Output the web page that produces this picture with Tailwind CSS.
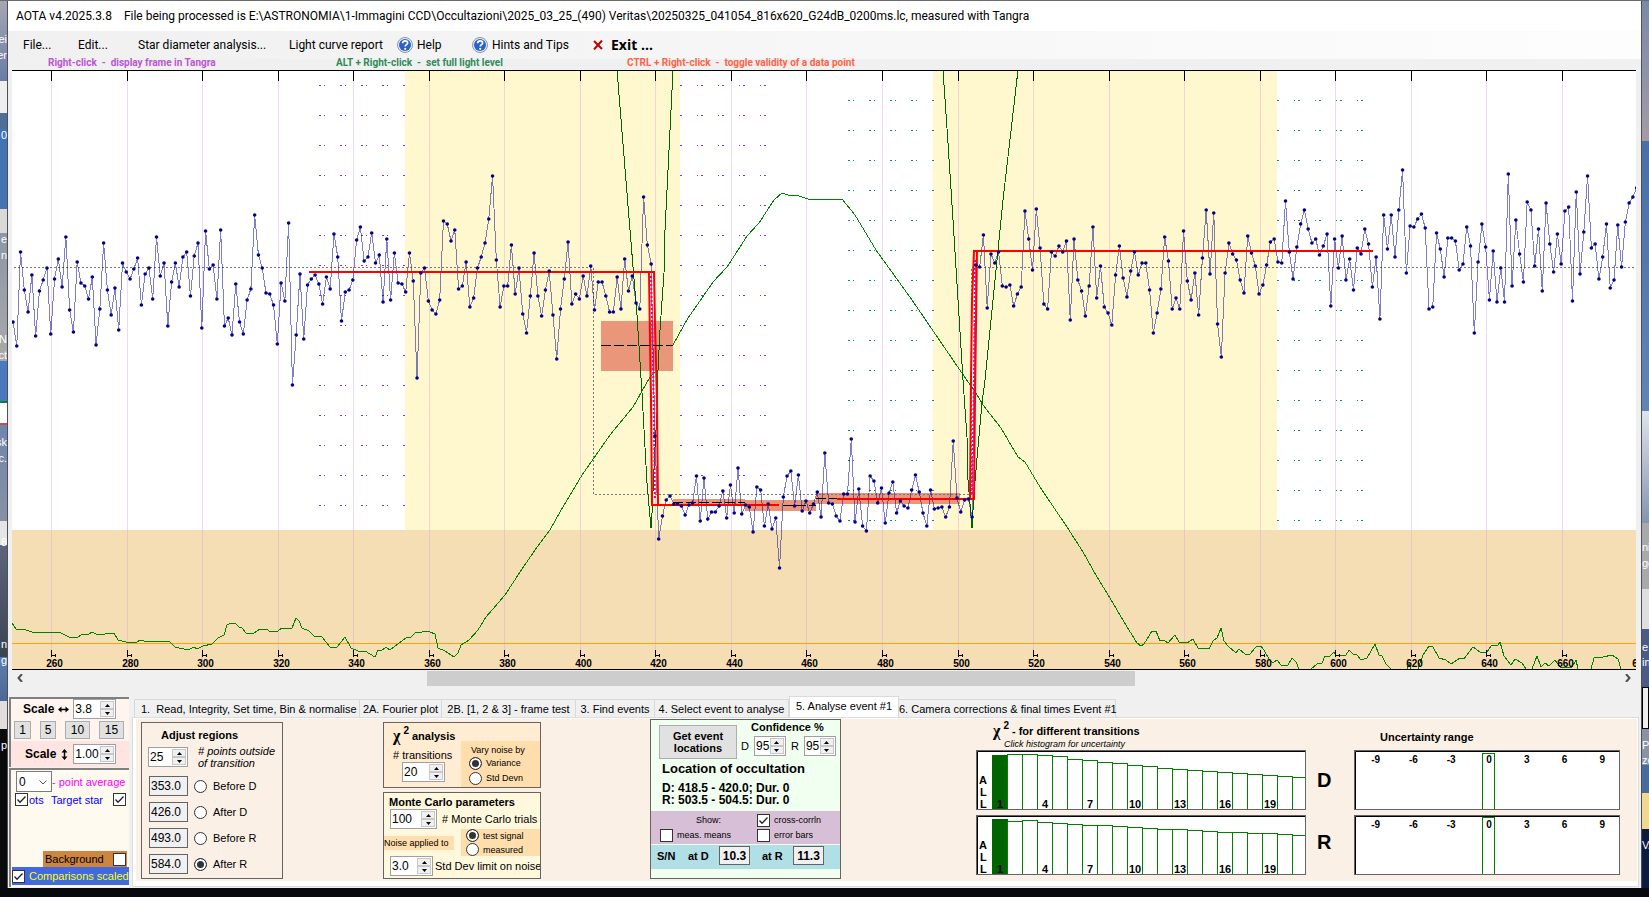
<!DOCTYPE html>
<html lang="en">
  <head>
    <meta charset="UTF-8" />
    <meta name="viewport" content="width=device-width, initial-scale=1.0" />
    <script src="https://cdn.jsdelivr.net/npm/@tailwindcss/browser@4"></script>
    <title>AOTA v4.2025.3.8</title>
  </head>
  <body class="bg-[#07090c] font-['Liberation_Sans',sans-serif] text-[11px] leading-3 text-black">
    <div class="flex min-h-screen flex-col">
      <div class="h-px bg-[#6b6a6c]"></div>
      <div class="flex">
        <!-- desktop, left edge -->
        <div class="relative w-[7px] shrink-0 overflow-hidden bg-[#090b0d] text-white" aria-hidden="true">
          <div class="h-20 bg-linear-to-b from-[#a5a6b2] to-[#6a7ca6]"></div>
          <div class="h-8 bg-[#eeeeee]"></div>
          <div class="h-4 bg-[#4f6f96]"></div>
          <div class="h-20 bg-[#4473b4]"></div>
          <div class="h-6 bg-[#d9d9d6]"></div>
          <div class="h-32 bg-linear-to-b from-[#8e96a6] to-[#a9a9a9]"></div>
          <div class="h-10 bg-[#4a7abd]"></div>
          <div class="h-6 border-y-2 border-t-[#0d8040] border-b-[#c0504d] bg-white"></div>
          <div class="h-24 bg-linear-to-b from-[#6f86ad] to-[#8791a3]"></div>
          <div class="h-6 bg-[#e5e5e5]"></div>
          <div class="h-28 bg-linear-to-b from-[#5d6678] to-[#3c4453]"></div>
          <div class="h-11 bg-linear-to-b from-[#5f7fb0] to-[#4b6796]"></div>
          <div class="h-7 bg-[#e3dcdc]"></div>
          <span class="absolute top-8 right-0">ei</span>
          <span class="absolute top-12 right-0">er</span>
          <span class="absolute top-32 right-0">0</span>
          <span class="absolute top-[232px] right-0">e</span>
          <span class="absolute top-[248px] right-0">n</span>
          <span class="absolute top-[332px] right-0">N</span>
          <span class="absolute top-[348px] right-0">ct</span>
          <span class="absolute top-[435px] right-0">sk</span>
          <span class="absolute top-[451px] right-0">c.</span>
          <span class="absolute top-[535px] right-0">8</span>
          <span class="absolute top-[637px] right-0">n</span>
          <span class="absolute top-[653px] right-0">g</span>
          <span class="absolute top-[738px] right-0">p</span>
        </div>

        <main class="min-w-0 flex-1 border-x border-[#4d5058] bg-[#f0f0f0] pb-px">
          <h1 class="flex h-[30px] items-center gap-3 bg-white pl-2 font-[Roboto,sans-serif] text-xs whitespace-nowrap">
            <span>AOTA v4.2025.3.8</span>
            <span>File being processed is E:\ASTRONOMIA\1-Immagini CCD\Occultazioni\2025_03_25_(490) Veritas\20250325_041054_816x620_G24dB_0200ms.lc, measured with Tangra</span>
          </h1>
          <nav class="flex h-7 items-center bg-linear-to-r from-[#f0f0f0] to-[#fdfdfd] pl-[15px] font-[Roboto,sans-serif] text-xs whitespace-nowrap">
            <button type="button" class="w-[55px] text-left">File...</button>
            <button type="button" class="w-[60px] text-left">Edit...</button>
            <button type="button" class="w-[151px] text-left">Star diameter analysis...</button>
            <button type="button" class="w-[108px] text-left">Light curve report</button>
            <button type="button" class="flex w-[75px] items-center gap-1">
              <svg class="size-4" viewBox="0 0 16 16"><circle cx="8" cy="8" r="7.5" fill="#e8edf5" stroke="#8797ad" /><circle cx="8" cy="8" r="6" fill="#2b62c9" /><path d="M5.6 6.2C5.7 4.6 6.8 3.8 8.2 3.8C9.6 3.8 10.6 4.7 10.6 5.9C10.6 7.6 8.2 7.7 8.2 9.6" fill="none" stroke="#fff" stroke-width="1.7" /><circle cx="8.2" cy="11.8" r="1.1" fill="#fff" /></svg>
              Help
            </button>
            <button type="button" class="flex w-[121px] items-center gap-1">
              <svg class="size-4" viewBox="0 0 16 16"><circle cx="8" cy="8" r="7.5" fill="#e8edf5" stroke="#8797ad" /><circle cx="8" cy="8" r="6" fill="#2b62c9" /><path d="M5.6 6.2C5.7 4.6 6.8 3.8 8.2 3.8C9.6 3.8 10.6 4.7 10.6 5.9C10.6 7.6 8.2 7.7 8.2 9.6" fill="none" stroke="#fff" stroke-width="1.7" /><circle cx="8.2" cy="11.8" r="1.1" fill="#fff" /></svg>
              Hints and Tips
            </button>
            <button type="button" class="flex items-center gap-2 font-['Open_Sans',sans-serif] text-sm font-bold">
              <svg class="size-[10px]" viewBox="0 0 10 10"><path d="M1 1L9 9M9 0.5L1 9.5" fill="none" stroke="#c00000" stroke-width="2" /></svg>
              Exit ...
            </button>
          </nav>
          <div class="flex h-[11px] items-start pl-10 font-[Roboto,sans-serif] text-[10px] leading-2 font-bold whitespace-nowrap">
            <span class="w-72 text-[#ba55d3]">Right-click&nbsp; -&nbsp; display frame in Tangra</span>
            <span class="w-[291px] text-[#2e8b57]">ALT + Right-click&nbsp; -&nbsp; set full light level</span>
            <span class="text-[#ff6347]">CTRL + Right-click&nbsp; -&nbsp; toggle validity of a data point</span>
          </div>

          <div class="mr-[5px] ml-1 h-[600px] bg-white">
            <svg class="block h-full w-full overflow-hidden" role="img" aria-label="Light curve">
              <g transform="translate(-12 -70)">
                <g shape-rendering="crispEdges">
                  <rect x="405" y="71" width="275" height="459" fill="#fff8cf" />
                  <rect x="933" y="71" width="344" height="459" fill="#fff8cf" />
                  <rect x="12" y="530" width="100%" height="139" fill="#f5deb3" />
                  <g id="grid"></g>
                  <g id="marks"></g>
                  <line x1="12" x2="1636" y1="643.5" y2="643.5" stroke="#ffa500" />
                  <g fill="#e9967a">
                    <rect x="601" y="321" width="72" height="50" />
                    <rect x="673" y="499" width="72" height="7" />
                    <rect x="745" y="500" width="71" height="11" />
                    <rect x="816" y="493" width="144" height="11" />
                  </g>
                  <path d="M14 267.5H593.5V494.5H971.5V267.5H1636" fill="none" stroke="#777" stroke-dasharray="2 2" />
                </g>
                <g fill="none" stroke="#008000" shape-rendering="crispEdges">
                  <polyline id="rise" />
                  <polyline id="fall" />
                </g>
                <path d="M617 70L630 230L637 315L642 393L647 483L651 528L652 513L655 447L657 413L658 370L660 330L664 273L665 230L673 70" fill="none" stroke="#006400" shape-rendering="crispEdges" />
                <path d="M943 70L948 143L953 220L958 300L963 380L967 437L968 480L972 528L974 493L978 447L982 403L985 380L993 300L1003 200L1018 70" fill="none" stroke="#006400" shape-rendering="crispEdges" />
                <polyline id="curve" fill="none" stroke="#00008b" stroke-opacity="0.5" shape-rendering="crispEdges" />
                <g fill="none" stroke="#f00" stroke-width="2">
                  <path d="M309 272H654L655 325L657 400L658 505" />
                  <path d="M649 272L650 340L651 400L652 505H779" />
                  <path d="M837 499H974L975 400L977 251" />
                  <path d="M970 499L971 380L972 300L974 251H1373" />
                </g>
                <path d="M651 276L653 360L655 500M972 494L974 380L975 260" fill="none" stroke="#e000b0" stroke-width="2" stroke-dasharray="2 2" />
                <path d="M601 345.5H673M673 502.5H745M783 505.5H816M816 498.5H837" fill="none" stroke="#000" stroke-dasharray="10 3" shape-rendering="crispEdges" />
                <g id="dots" fill="#00008b"></g>
                <g id="axis" font-size="10" font-weight="700" text-anchor="middle"></g>
                <rect x="12" y="70" width="100%" height="1" />
                <rect x="12" y="669" width="100%" height="1" />
              </g>
            </svg>
          </div>

          <div class="mr-[5px] ml-1 flex h-4 items-center justify-between px-[5px] text-[#505050]">
            <svg class="w-[6px]" viewBox="0 0 6 8"><path d="M5 0L1.5 4L5 8" fill="none" stroke="currentColor" stroke-width="2" /></svg>
            <div class="flex h-full flex-1 pt-px"><div class="ml-[25.2%] h-full w-[44.2%] bg-[#cdcdcd]"></div></div>
            <svg class="w-[6px]" viewBox="0 0 6 8"><path d="M1 0L4.5 4L1 8" fill="none" stroke="currentColor" stroke-width="2" /></svg>
          </div>

          <div class="flex pt-[10px] pr-[2px] pl-px whitespace-nowrap">
            <aside class="w-[120px] shrink-0">
              <div class="mt-px h-[70px] border-t-2 border-l-2 border-[#808080] bg-[#ffe4e1]">
                <div class="h-[42px] bg-[#fff5ee]">
                  <div class="flex items-center gap-1 pl-3">
                    <label for="sx" class="flex items-center gap-1 text-xs font-bold">Scale
                      <svg class="h-[7px] w-[11px]" viewBox="0 0 11 7"><path d="M0 3.5L3.5 0.5V2.8H7.5V0.5L11 3.5L7.5 6.5V4.2H3.5V6.5Z" /></svg>
                    </label>
                    <div data-spin class="flex h-[20px] w-[43px] border border-[#a0a0a0] bg-white p-px"><input id="sx" value="3.8" class="min-w-0 flex-1 text-xs outline-none" /></div>
                  </div>
                  <div class="flex gap-[9px] pt-[2px] pl-[3px] text-xs">
                    <button type="button" class="h-[18px] w-[17px] border border-[#adadad] bg-[#e1e1e1]">1</button>
                    <button type="button" class="h-[18px] w-4 border border-[#adadad] bg-[#e1e1e1]">5</button>
                    <button type="button" class="h-[18px] w-[25px] border border-[#adadad] bg-[#e1e1e1]">10</button>
                    <button type="button" class="h-[18px] w-[25px] border border-[#adadad] bg-[#e1e1e1]">15</button>
                  </div>
                </div>
                <div class="flex items-center gap-[5px] pt-[3px] pl-[14px]">
                  <label for="sy" class="flex items-center gap-[5px] text-xs font-bold">Scale
                    <svg class="h-[11px] w-[7px]" viewBox="0 0 7 11"><path d="M3.5 0L6.5 3.5H4.2V7.5H6.5L3.5 11L0.5 7.5H2.8V3.5H0.5Z" /></svg>
                  </label>
                  <div data-spin class="flex h-[20px] w-[43px] border border-[#a0a0a0] bg-white p-px"><input id="sy" value="1.00" class="min-w-0 flex-1 text-xs outline-none" /></div>
                </div>
              </div>
              <div class="mt-px flex h-[119px] flex-col overflow-hidden border-t-2 border-l-2 border-[#808080] bg-[#fffaf0]">
                <div class="flex items-center pt-px pl-[5px]">
                  <div class="relative h-[21px] w-9 border border-[#7a7a7a] bg-white">
                    <select id="avg" class="h-full w-full appearance-none pl-[2px] text-xs outline-none"><option>0</option></select>
                    <svg class="pointer-events-none absolute top-[8px] right-1 w-2" viewBox="0 0 8 5"><path d="M0.5 0.5L4 4L7.5 0.5" fill="none" stroke="#555" /></svg>
                  </div>
                  <label for="avg" class="text-[#f0f]">- point average</label>
                </div>
                <div class="flex items-center pt-px pl-1 text-[#00f]">
                  <input id="pts" type="checkbox" checked data-check class="size-[13px] appearance-none border border-[#333] bg-white" />
                  <label for="pts" class="w-[23px] pl-px">ots</label>
                  <label for="target" class="w-[62px]">Target star</label>
                  <input id="target" type="checkbox" checked data-check class="size-[13px] appearance-none border border-[#333] bg-white" />
                </div>
                <div class="mt-auto mr-[2px] ml-8 flex h-4 items-center justify-between bg-[#cd853f] pr-px pl-[2px]">
                  <label for="bg">Background</label>
                  <input id="bg" type="checkbox" class="size-[13px] appearance-none border border-[#333] bg-white" />
                </div>
                <div class="mb-[2px] ml-px flex h-[18px] items-center gap-1 overflow-hidden bg-[#4169e1] text-[#ff0]">
                  <input id="cmp" type="checkbox" checked data-check class="size-[13px] shrink-0 appearance-none border border-[#333] bg-white" />
                  <label for="cmp">Comparisons scaled</label>
                </div>
              </div>
            </aside>

            <section class="ml-[3px] min-w-0 flex-1">
              <div class="flex h-[21px] items-end pl-[2px]" role="tablist">
                <button type="button" role="tab" class="h-[18px] w-[226px] border border-b-0 border-[#d9d9d9] pl-[6px] text-left whitespace-pre">1.  Read, Integrity, Set time, Bin &amp; normalise</button>
                <button type="button" role="tab" class="h-[18px] w-[82px] border border-b-0 border-l-0 border-[#d9d9d9]">2A. Fourier plot</button>
                <button type="button" role="tab" class="h-[18px] w-[134px] border border-b-0 border-l-0 border-[#d9d9d9]">2B. [1, 2 &amp; 3] - frame test</button>
                <button type="button" role="tab" class="h-[18px] w-[79px] border border-b-0 border-l-0 border-[#d9d9d9]">3. Find events</button>
                <button type="button" role="tab" class="h-[18px] w-[134px] border border-b-0 border-l-0 border-[#d9d9d9]">4. Select event to analyse</button>
                <button type="button" role="tab" aria-selected="true" class="h-[21px] w-[110px] border border-b-0 border-[#d9d9d9] bg-white pb-[3px]">5. Analyse event #1</button>
                <button type="button" role="tab" class="h-[18px] w-[217px] border border-b-0 border-l-0 border-[#d9d9d9]">6. Camera corrections &amp; final times Event #1</button>
              </div>
              <div class="h-[170px] border border-[#dcdcdc] bg-white pt-px pr-px pb-[5px] pl-[3px]">
                <div class="flex h-full items-start overflow-hidden bg-[#faf0e6] pl-[5px]" role="tabpanel">

                  <form class="mt-[3px] h-[157px] w-[142px] shrink-0 border border-[#646464] pt-[6px] pl-[6px]">
                    <h2 class="pl-[13px] font-bold">Adjust regions</h2>
                    <div class="flex h-[28px] items-center gap-[10px] pt-[4px]">
                      <div data-spin class="flex h-[20px] w-[40px] border border-[#a0a0a0] bg-white p-px"><input id="outside" value="25" class="min-w-0 flex-1 text-xs outline-none" /></div>
                      <label for="outside" class="italic"># points outside<br />of transition</label>
                    </div>
                    <div class="grid grid-cols-[39px_13px_auto] items-center justify-start gap-x-[6px] gap-y-[6px] pt-[7px] pl-px">
                      <input aria-label="Before D value" value="353.0" class="h-[20px] min-w-0 border border-[#646464] bg-[#f0f0f0] pl-px text-xs" />
                      <input type="radio" name="region" id="bd" class="size-[13px] appearance-none rounded-full border border-[#333] bg-white" />
                      <label for="bd">Before D</label>
                      <input aria-label="After D value" value="426.0" class="h-[20px] min-w-0 border border-[#646464] bg-[#f0f0f0] pl-px text-xs" />
                      <input type="radio" name="region" id="ad" class="size-[13px] appearance-none rounded-full border border-[#333] bg-white" />
                      <label for="ad">After D</label>
                      <input aria-label="Before R value" value="493.0" class="h-[20px] min-w-0 border border-[#646464] bg-[#f0f0f0] pl-px text-xs" />
                      <input type="radio" name="region" id="br" class="size-[13px] appearance-none rounded-full border border-[#333] bg-white" />
                      <label for="br">Before R</label>
                      <input aria-label="After R value" value="584.0" class="h-[20px] min-w-0 border border-[#646464] bg-[#f0f0f0] pl-px text-xs" />
                      <input type="radio" name="region" id="ar" checked class="size-[13px] appearance-none rounded-full border border-[#333] bg-[#333] shadow-[inset_0_0_0_2px_white]" />
                      <label for="ar">After R</label>
                    </div>
                  </form>

                  <div class="mt-[3px] ml-[100px] flex w-[158px] shrink-0 flex-col gap-1">
                    <form class="flex h-[66px] border border-[#646464] bg-[#ffecd2]">
                      <div class="w-[77px] shrink-0 pt-[4px] pl-[9px]">
                        <h2 class="flex h-[18px] items-center font-bold"><span class="font-['Liberation_Serif',serif] text-base leading-[18px]">χ</span><sup class="px-[3px] text-[10px]">2</sup><span>analysis</span></h2>
                        <label for="trans" class="block pt-[4px]"># transitions</label>
                        <div data-spin class="mt-px ml-[9px] flex h-[20px] w-[43px] border border-[#a0a0a0] bg-white p-px"><input id="trans" value="20" class="min-w-0 flex-1 text-xs outline-none" /></div>
                      </div>
                      <div class="mt-[18px] flex-1 bg-[#ffdead] pt-[3px] pl-2 text-[9px]">
                        <div class="pl-[2px]">Vary noise by</div>
                        <div class="flex h-[14px] items-center gap-1"><input type="radio" name="vary" id="var" checked class="size-[13px] appearance-none rounded-full border border-[#333] bg-[#333] shadow-[inset_0_0_0_2px_white]" /><label for="var">Variance</label></div>
                        <div class="mt-px flex h-[14px] items-center gap-1"><input type="radio" name="vary" id="std" class="size-[13px] appearance-none rounded-full border border-[#333] bg-white" /><label for="std">Std Devn</label></div>
                      </div>
                    </form>
                    <form class="h-[87px] overflow-hidden border border-[#646464] bg-[#fff8dc]">
                      <h2 class="pt-[3px] pl-[5px] font-bold">Monte Carlo parameters</h2>
                      <div class="flex items-center gap-[5px] pt-px pl-[6px]">
                        <div data-spin class="flex h-[20px] w-[47px] border border-[#a0a0a0] bg-white p-px"><input id="trials" value="100" class="min-w-0 flex-1 text-xs outline-none" /></div>
                        <label for="trials"># Monte Carlo trials</label>
                      </div>
                      <div class="flex items-center justify-between text-[9px]">
                        <span class="bg-[#ffdead] pr-[5px] leading-[14px]">Noise applied to</span>
                        <div class="flex h-[27px] w-[79px] flex-col justify-center gap-px bg-[#ffdead] pl-[5px]">
                          <div class="flex items-center gap-1"><input type="radio" name="applied" id="test" checked class="size-[13px] appearance-none rounded-full border border-[#333] bg-[#333] shadow-[inset_0_0_0_2px_white]" /><label for="test">test signal</label></div>
                          <div class="flex items-center gap-1"><input type="radio" name="applied" id="meas" class="size-[13px] appearance-none rounded-full border border-[#333] bg-white" /><label for="meas">measured</label></div>
                        </div>
                      </div>
                      <div class="flex items-center gap-[2px] overflow-hidden pl-[6px]">
                        <div data-spin class="flex h-[20px] w-[43px] shrink-0 border border-[#a0a0a0] bg-white p-px"><input id="limit" value="3.0" class="min-w-0 flex-1 text-xs outline-none" /></div>
                        <label for="limit">Std Dev limit on noise</label>
                      </div>
                    </form>
                  </div>

                  <form class="ml-[109px] h-40 w-[191px] shrink-0 border border-[#646464] bg-[#f0fff0]">
                    <div class="flex gap-1 pl-2">
                      <button type="button" class="mt-[5px] h-[34px] w-[78px] border border-[#adadad] bg-[#e1e1e1] font-bold">Get event<br />locations</button>
                      <div>
                        <div class="h-4 pt-px pl-[10px] font-bold">Confidence %</div>
                        <div class="flex items-center gap-[5px]">
                          <label for="cd">D</label>
                          <div data-spin class="flex h-[20px] w-8 border border-[#a0a0a0] bg-white p-px"><input id="cd" value="95" class="min-w-0 flex-1 text-xs outline-none" /></div>
                          <label for="cr">R</label>
                          <div data-spin class="flex h-[20px] w-8 border border-[#a0a0a0] bg-white p-px"><input id="cr" value="95" class="min-w-0 flex-1 text-xs outline-none" /></div>
                        </div>
                      </div>
                    </div>
                    <h2 class="pt-[2px] pl-[11px] text-[13px] leading-4 font-bold">Location of occultation</h2>
                    <div class="pt-[4px] pl-[11px] text-xs leading-[14px] font-bold">D: 418.5 - 420.0; Dur. 0</div>
                    <div class="flex h-[9px] items-center overflow-hidden pl-[11px] text-xs leading-[14px] font-bold">R: 503.5 - 504.5; Dur. 0</div>
                    <div class="mt-[7px] grid h-[33px] grid-cols-[97px_auto] content-center gap-y-[2px] bg-[#d8bfd8] pl-[9px] text-[9px]">
                      <span class="pl-9">Show:</span>
                      <div class="flex items-center gap-1"><input id="cc" type="checkbox" checked data-check class="size-[13px] appearance-none border border-[#333] bg-white" /><label for="cc">cross-corrln</label></div>
                      <div class="flex items-center gap-1"><input id="mm" type="checkbox" class="size-[13px] appearance-none border border-[#333] bg-white" /><label for="mm">meas. means</label></div>
                      <div class="flex items-center gap-1"><input id="eb" type="checkbox" class="size-[13px] appearance-none border border-[#333] bg-white" /><label for="eb">error bars</label></div>
                    </div>
                    <div class="mt-px flex h-6 items-center bg-[#b0e0e6] pb-[3px] pl-[6px] font-bold">
                      <span class="w-[31px]">S/N</span>
                      <label for="snd" class="w-[31px]">at D</label>
                      <input id="snd" value="10.3" class="h-[19px] w-[31px] border border-[#646464] bg-[#f0f0f0] text-center text-xs font-bold" />
                      <label for="snr" class="ml-3 w-[31px]">at R</label>
                      <input id="snr" value="11.3" class="h-[19px] w-[31px] border border-[#646464] bg-[#f0f0f0] text-center text-xs font-bold" />
                    </div>
                  </form>

                  <div class="ml-[135px] w-[330px] shrink-0">
                    <h2 class="flex h-[18px] items-center pt-[5px] pl-[17px] font-bold"><span class="font-['Liberation_Serif',serif] text-base leading-[18px]">χ</span><sup class="px-[3px] text-[10px]">2</sup><span>- for different transitions</span></h2>
                    <p class="h-[13px] pl-7 text-[9px] leading-[14px] italic">Click histogram for uncertainty</p>
                    <svg id="histD" class="block h-[60px] w-full" role="img" aria-label="Chi squared, D"></svg>
                    <svg id="histR" class="mt-[5px] block h-[60px] w-full" role="img" aria-label="Chi squared, R"></svg>
                  </div>
                  <div class="flex w-12 shrink-0 flex-col pt-[31px] pl-[11px] text-xl font-bold">
                    <span class="leading-[60px]">D</span>
                    <span class="leading-[65px]">R</span>
                  </div>
                  <div class="w-[266px] shrink-0">
                    <h2 class="h-[31px] pt-3 pl-[26px] font-bold">Uncertainty range</h2>
                    <svg id="uncD" class="block h-[60px] w-full" role="img" aria-label="Uncertainty, D"></svg>
                    <svg id="uncR" class="mt-[5px] block h-[60px] w-full" role="img" aria-label="Uncertainty, R"></svg>
                  </div>
                </div>
              </div>
            </section>
          </div>
        </main>

        <!-- desktop, right edge -->
        <div class="relative w-[7px] shrink-0 overflow-hidden bg-[#0d1a40] text-white" aria-hidden="true">
          <div class="h-[140px] bg-linear-to-b from-[#7a89a8] to-[#a39ca5]"></div>
          <div class="h-[270px] bg-linear-to-b from-[#4a6fa8] to-[#6285b3]"></div>
          <div class="h-28 bg-linear-to-b from-[#e0e3ea] to-[#8495b0]"></div>
          <div class="h-[66px] bg-[#a9a9ab]"></div>
          <div class="h-10 bg-[#dedede]"></div>
          <div class="h-[58px] bg-[#4a5c83]"></div>
          <div class="h-[42px] border border-black bg-[#eeeeee]"></div>
          <div class="h-9 bg-[#8a93a3]"></div>
          <div class="h-7 bg-[#466c9c]"></div>
          <div class="h-9 bg-[#f0d890]"></div>
          <span class="absolute top-[540px] left-0">ni</span>
          <span class="absolute top-[556px] left-0">ge</span>
          <span class="absolute top-[640px] left-0">e</span>
          <span class="absolute top-[655px] left-0">in</span>
          <span class="absolute top-[738px] left-0">P</span>
          <span class="absolute top-[753px] left-0">zo</span>
          <span class="absolute top-[838px] left-0">VA</span>
        </div>
      </div>
    </div>
  </body>
  <script>
    // one level per frame, starting at frame 250
    const levels = [
      322,346,252,290,312,275,336,291,280,268, 334,279,259,287,237,310,332,262,283,286,
      299,277,345,309,243,290,315,288,330,263, 272,279,269,258,305,274,268,299,237,276,
      263,326,282,263,287,257,252,296,256,243, 328,231,269,265,299,230,326,318,335,284,
      322,334,300,289,215,255,268,293,294,305, 344,283,301,223,385,335,274,339,285,279,
      275,284,304,277,289,234,257,321,292,290, 280,240,227,261,257,233,263,255,302,239,
      300,253,283,284,292,253,281,378,273,268, 301,310,314,300,221,224,241,230,289,286,
      262,307,298,268,257,243,219,176,260,307, 286,286,245,294,268,314,333,296,253,296,
      316,290,271,315,359,309,279,242,304,294, 299,276,296,266,310,282,282,296,312,312,
      277,309,259,291,276,303,309,197,245,264, 436,539,516,500,496,504,504,506,515,505,
      503,476,521,478,519,512,512,506,491,518, 485,513,468,514,505,507,532,487,490,526,
      504,529,518,568,497,476,471,506,475,511, 501,513,504,492,517,453,503,504,516,521,
      494,494,439,522,489,526,531,476,481,503, 488,523,493,482,513,501,506,508,490,475,
      492,513,526,490,509,508,507,517,507,441, 498,512,500,499,517,265,267,235,308,254,
      263,252,286,287,285,306,294,287,211,239, 270,209,248,304,309,252,256,246,252,241,
      320,239,280,291,316,286,227,298,266,307, 313,325,275,246,278,297,271,252,275,263,
      263,290,333,313,289,237,261,309,298,309, 231,281,300,273,315,258,210,274,213,324,
      357,273,243,254,260,280,293,236,253,266, 294,285,265,242,239,262,263,201,252,279,
      247,224,210,229,243,239,255,246,234,306, 239,268,236,280,259,290,248,254,229,244,
      287,257,319,215,249,215,257,210,170,273, 226,227,219,214,228,309,307,233,249,277,
      238,238,241,270,264,227,246,333,262,224, 247,300,251,302,268,302,174,286,220,254,
      282,202,210,266,229,291,203,244,272,234, 264,211,207,301,192,274,232,176,248,244,
      279,257,224,288,280,225,267,222,203,197, 188
    ];

    // cross correlation, before and after the mean box at D
    const rise = '12,623 16,629 23,629 32,632 46,632 61,633 69,637 76,638 83,634 88,635 92,632 98,635 105,634 114,633 118,640 126,642 137,642 140,640 144,641 170,642 175,647 188,650 194,647 197,649 203,646 212,644 218,638 224,635 227,625 231,623 236,624 239,627 242,628 246,633 254,633 260,629 267,629 269,631 278,631 282,628 292,628 296,618 299,621 302,628 309,631 314,636 322,637 330,647 337,647 345,637 351,648 358,651 365,651 375,657 378,650 381,651 386,647 390,650 402,641 407,637 411,637 416,632 420,633 424,631 430,632 435,634 438,648 445,651 454,657 458,653 461,645 469,640 478,630 486,617 505,595 520,572 535,550 550,530 560,512 582,475 610,435 633,407 650,377 655,372';
    const fall = '673,345 688,318 702,298 713,282 727,267 740,247 747,236 759,223 774,200 782,193 788,195 799,196 808,199 842,199 855,215 876,250 912,300 966,379 976,393 983,405 1001,428 1018,457 1025,462 1040,487 1067,527 1083,552 1097,577 1110,598 1124,622 1137,643 1141,646 1144,644 1152,631 1156,631 1160,641 1164,640 1168,643 1175,635 1179,642 1187,643 1193,639 1198,648 1209,649 1213,641 1217,638 1221,628 1224,641 1228,646 1236,653 1239,649 1245,654 1250,654 1256,647 1261,646 1264,650 1269,659 1273,663 1277,660 1281,665 1288,665 1292,658 1296,662 1299,669 1311,669 1317,664 1322,663 1325,656 1330,656 1334,652 1337,656 1346,655 1349,650 1353,654 1357,655 1361,660 1367,658 1375,644 1379,655 1382,656 1386,664 1391,669 1407,669 1409,664 1411,669 1418,669 1423,655 1429,646 1433,647 1439,658 1446,660 1451,664 1460,658 1464,659 1473,647 1480,652 1487,652 1491,646 1498,645 1500,642 1504,656 1511,665 1515,659 1522,663 1526,669 1532,669 1537,656 1541,667 1545,663 1549,666 1555,660 1560,667 1567,668 1572,667 1576,660 1578,669 1591,669 1594,658 1603,657 1612,655 1618,659 1621,669';

    const xOf = (frame) => 13 + (frame - 250) * 3.776;

    document.getElementById('rise').setAttribute('points', rise);
    document.getElementById('fall').setAttribute('points', fall);
    document.getElementById('curve').setAttribute('points', levels.map((y, i) => `${xOf(250 + i)},${y}`).join(' '));
    document.getElementById('dots').innerHTML = levels.map((y, i) => `<circle cx="${xOf(250 + i)}" cy="${y}" r="1.8" />`).join('');

    let grid = '';
    let axis = '';
    for (let frame = 260; frame <= 680; frame += 20) {
      const x = Math.round(xOf(frame) + 0.5) + 0.5;
      grid += `<line x1="${x}" x2="${x}" y1="81" y2="669" stroke="#dda0dd" stroke-opacity="0.4" />`;
      grid += `<line x1="${x}" x2="${x}" y1="71" y2="81" stroke="#000" />`;
      axis += `<path d="M${x} 650V657M${x} 655.5H${x + 4}M${x + 4} 654V657" fill="none" stroke="#000" /><text x="${x + 3}" y="667">${frame}</text>`;
    }
    document.getElementById('grid').innerHTML = grid;
    document.getElementById('axis').innerHTML = axis;

    // dash-dot rows either side of each measured region
    let marks = '';
    function markRows(top, left, right, color) {
      for (let y = top; y < 530; y += 30) {
        for (let k = 0; k < 5; k++) {
          marks += `<rect x="${left + 21 * k}" y="${y}" width="2" height="1" fill="${color}" />`;
          marks += `<rect x="${right + 21 * k}" y="${y}" width="2" height="1" fill="${color}" />`;
          if (k < 4) marks += `<rect x="${left + 5 + 21 * k}" y="${y}" width="1" height="1" fill="${color}" />`;
          if (k > 0) marks += `<rect x="${right - 4 + 21 * k}" y="${y}" width="1" height="1" fill="${color}" />`;
        }
      }
    }
    markRows(85, 319, 680, '#8a2be2');
    markRows(100, 848, 1277, '#008b8b');
    document.getElementById('marks').innerHTML = marks;

    const frameLines = '<rect width="100%" height="100%" fill="#646464" /><rect x="1" y="1" width="100%" height="58" fill="#fff" /><path d="M1.5 59V1.5H1000" fill="none" stroke="#000" />';

    function histogram(id, tops) {
      let out = frameLines;
      tops.forEach((top, i) => {
        const x = 16 + 15 * i;
        out += `<rect x="${x + 0.5}" y="${top + 0.5}" width="15" height="60" fill="${i ? '#fff' : '#006400'}" stroke="${i ? '#008000' : '#006400'}" />`;
        if (i % 3 === 0 && i < 20) out += `<text x="${x + 8}" y="58" text-anchor="middle">${i + 1}</text>`;
      });
      out += '<text x="3" y="34">A</text><text x="4" y="46">L</text><text x="4" y="58">L</text>';
      out += '<rect y="59" width="100%" height="1" fill="#646464" /><rect x="329" width="1" height="60" fill="#646464" />';
      document.getElementById(id).innerHTML = `<g font-size="11" font-weight="700">${out}</g>`;
    }
    histogram('histD', [5,4,4,5,6,9,10,12,13,15,16,18,19,20,21,22,23,24,25,26,27]);
    histogram('histR', [4,6,5,7,8,9,10,10,11,12,13,14,14,15,16,17,17,18,18,19,20]);

    function uncertainty(id, top) {
      let out = frameLines;
      out += `<rect x="128.5" y="${top + 0.5}" width="12" height="60" fill="none" stroke="#008000" />`;
      [-9, -6, -3, 0, 3, 6, 9].forEach((n) => {
        out += `<text x="${135 + n * 12.6}" y="13" text-anchor="middle">${n}</text>`;
      });
      out += '<rect y="59" width="100%" height="1" fill="#646464" /><rect x="265" width="1" height="60" fill="#646464" />';
      document.getElementById(id).innerHTML = `<g font-size="10" font-weight="700">${out}</g>`;
    }
    uncertainty('uncD', 3);
    uncertainty('uncR', 2);

    document.querySelectorAll('[data-spin]').forEach((box) => {
      box.insertAdjacentHTML('beforeend', `
        <span class="flex w-[14px] shrink-0 flex-col">
          <button type="button" aria-label="Up" class="grid flex-1 place-items-center border border-[#c8c8c8] bg-[#f0f0f0]"><svg class="h-[3px] w-[5px]" viewBox="0 0 5 3"><path d="M0 3L2.5 0L5 3Z" /></svg></button>
          <button type="button" aria-label="Down" class="grid flex-1 place-items-center border border-[#c8c8c8] bg-[#f0f0f0]"><svg class="h-[3px] w-[5px]" viewBox="0 0 5 3"><path d="M0 0L2.5 3L5 0Z" /></svg></button>
        </span>`);
    });

    document.querySelectorAll('[data-check]').forEach((input) => {
      const wrap = document.createElement('span');
      wrap.className = 'relative block size-[13px] shrink-0';
      input.classList.add('peer', 'block');
      input.replaceWith(wrap);
      wrap.append(input);
      wrap.insertAdjacentHTML('beforeend', '<svg class="pointer-events-none absolute inset-0 hidden size-[13px] peer-checked:block" viewBox="0 0 13 13"><path d="M2.5 6.5L5 9.2L10.5 3.5" fill="none" stroke="#222" stroke-width="1.3" /></svg>');
    });
  </script>
</html>
